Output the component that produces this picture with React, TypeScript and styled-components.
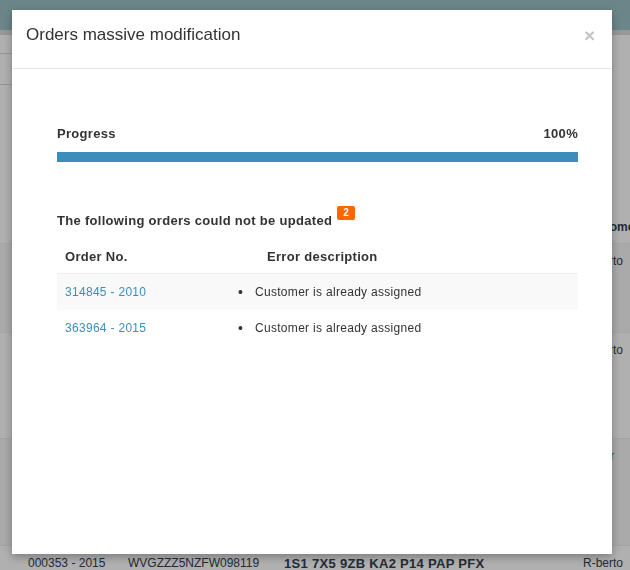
import React from "react";
import styled, { createGlobalStyle } from "styled-components";

const GlobalStyle = createGlobalStyle`
  html, body { margin: 0; padding: 0; }
  body {
    font-family: "Liberation Sans", Arial, sans-serif;
    color: #333;
    background: #fff;
  }
  * { box-sizing: border-box; }
`;

/* ---------- background page ---------- */

const Page = styled.div`
  width: 630px;
  height: 570px;
  overflow: hidden;
  background: #fff;
  display: flex;
  flex-direction: column;
`;

const TopBar = styled.div`
  height: 30px;
  flex: none;
  background: #9cc1c6;
`;

const SubBar = styled.div`
  height: 5px;
  flex: none;
  background: #dcdcdc;
`;

const FilterArea = styled.div`
  height: 175px;
  flex: none;
  padding-top: 18px;
`;

const FilterBox = styled.div`
  width: 200px;
  height: 32px;
  border-top: 1px solid #d8d8d8;
  border-bottom: 1px solid #d8d8d8;
`;

const BgRow = styled.div<{ $h: number; $striped?: boolean; $head?: boolean }>`
  height: ${(p) => p.$h}px;
  flex: none;
  display: grid;
  grid-template-columns: 100px 156px 299px 1fr;
  align-items: start;
  padding: 9px 0 0 28px;
  font-size: 12px;
  line-height: 17px;
  color: #34404f;
  font-weight: ${(p) => (p.$head ? 700 : 400)};
  background: ${(p) => (p.$striped ? "#f6f6f6" : "#fff")};
  border-top: ${(p) => (p.$head ? "none" : "1px solid #ececec")};
`;

const BgCell = styled.span<{ $bold?: boolean; $link?: boolean }>`
  white-space: nowrap;
  font-weight: ${(p) => (p.$bold ? 700 : "inherit")};
  font-size: ${(p) => (p.$bold ? "13px" : "12px")};
  letter-spacing: ${(p) => (p.$bold ? "0.3px" : "0")};
  color: ${(p) => (p.$link ? "#3c8dbc" : "inherit")};
`;

/* ---------- modal ---------- */

const Overlay = styled.div`
  position: fixed;
  inset: 0;
  background: rgba(0, 0, 0, 0.31);
`;

const Modal = styled.div`
  position: fixed;
  top: 10px;
  left: 12px;
  width: 600px;
  height: 544px;
  background: #fff;
  box-shadow: 0 3px 9px rgba(0, 0, 0, 0.3);
  display: flex;
  flex-direction: column;
`;

const ModalHeader = styled.div`
  display: flex;
  justify-content: space-between;
  align-items: flex-start;
  padding: 15px 15px 22px 14px;
  border-bottom: 1px solid #e5e5e5;
`;

const Title = styled.h4`
  margin: 0;
  font-size: 17px;
  line-height: 20px;
  font-weight: 400;
  color: #333;
`;

const CloseButton = styled.button`
  border: none;
  background: none;
  padding: 0;
  margin: 1px 2px 0 0;
  font-family: "Liberation Sans", Arial, sans-serif;
  font-size: 19px;
  line-height: 20px;
  font-weight: 700;
  color: #c4c4c4;
  cursor: pointer;
`;

const ModalBody = styled.div`
  padding: 56px 34px 0 45px;
  display: flex;
  flex-direction: column;
`;

const ProgressHead = styled.div`
  display: flex;
  justify-content: space-between;
  font-size: 13px;
  line-height: 18px;
  font-weight: 700;
  letter-spacing: 0.3px;
  color: #333;
`;

const ProgressTrack = styled.div`
  margin-top: 9px;
  height: 10px;
  background: #f0f0f0;
`;

const ProgressFill = styled.div`
  height: 100%;
  background: #3c8dbc;
`;

const SectionTitle = styled.div`
  margin-top: 50px;
  font-size: 13px;
  line-height: 18px;
  font-weight: 700;
  letter-spacing: 0.3px;
  color: #333;
  display: flex;
  align-items: flex-start;
`;

const Badge = styled.span`
  margin: -6px 0 0 5px;
  height: 14px;
  padding: 0 6px;
  border-radius: 2px;
  background: #ff6600;
  color: #fff;
  font-size: 10px;
  line-height: 14px;
  font-weight: 700;
  letter-spacing: 0;
`;

const Table = styled.div`
  margin-top: 10px;
  display: grid;
  grid-template-columns: 175px 1fr;
`;

const HeadCell = styled.div<{ $indent: number }>`
  padding: 8px 0 8px ${(p) => p.$indent}px;
  font-size: 13px;
  line-height: 17px;
  font-weight: 700;
  letter-spacing: 0.3px;
  color: #333;
  border-bottom: 1px solid #eeeeee;
`;

const Cell = styled.div<{ $striped: boolean; $indent: number }>`
  height: 36px;
  display: flex;
  align-items: center;
  padding-left: ${(p) => p.$indent}px;
  background: ${(p) => (p.$striped ? "#f9f9f9" : "#fff")};
  font-size: 12px;
  letter-spacing: 0.3px;
  color: #333;
`;

const OrderLink = styled.a`
  color: #3c8dbc;
  text-decoration: none;
`;

const Bullet = styled.span`
  width: 17px;
  flex: none;
  font-size: 14px;
  line-height: 12px;
`;

const errors = [
  { order: "314845 - 2010", message: "Customer is already assigned" },
  { order: "363964 - 2015", message: "Customer is already assigned" },
];

export default function App() {
  return (
    <>
      <GlobalStyle />
      <Page>
        <TopBar />
        <SubBar />
        <FilterArea>
          <FilterBox />
        </FilterArea>
        <BgRow $h={33} $head>
          <BgCell>Order No.</BgCell>
          <BgCell>VIN</BgCell>
          <BgCell>Options</BgCell>
          <BgCell>Customer</BgCell>
        </BgRow>
        <BgRow $h={89} $striped>
          <BgCell>314845 - 2010</BgCell>
          <BgCell>WVGZZZ5NZAW014032</BgCell>
          <BgCell $bold>1S1 7X5 9ZB</BgCell>
          <BgCell>R-berto</BgCell>
        </BgRow>
        <BgRow $h={106}>
          <BgCell>363964 - 2015</BgCell>
          <BgCell>WVGZZZ5NZFW012345</BgCell>
          <BgCell $bold>KA2 P14 PAP</BgCell>
          <BgCell>R-berto</BgCell>
        </BgRow>
        <BgRow $h={107} $striped>
          <BgCell>000352 - 2015</BgCell>
          <BgCell>WVGZZZ5NZFW098118</BgCell>
          <BgCell $bold>PFX</BgCell>
          <BgCell $link>Editar</BgCell>
        </BgRow>
        <BgRow $h={40}>
          <BgCell>000353 - 2015</BgCell>
          <BgCell>WVGZZZ5NZFW098119</BgCell>
          <BgCell $bold>1S1 7X5 9ZB KA2 P14 PAP PFX</BgCell>
          <BgCell>R-berto</BgCell>
        </BgRow>
      </Page>
      <Overlay />
      <Modal>
        <ModalHeader>
          <Title>Orders massive modification</Title>
          <CloseButton aria-label="Close">×</CloseButton>
        </ModalHeader>
        <ModalBody>
          <ProgressHead>
            <span>Progress</span>
            <span>100%</span>
          </ProgressHead>
          <ProgressTrack>
            <ProgressFill style={{ width: "100%" }} />
          </ProgressTrack>
          <SectionTitle>
            The following orders could not be updated
            <Badge>{errors.length}</Badge>
          </SectionTitle>
          <Table>
            <HeadCell $indent={8}>Order No.</HeadCell>
            <HeadCell $indent={35}>Error description</HeadCell>
            {errors.map((e, i) => (
              <React.Fragment key={e.order}>
                <Cell $striped={i % 2 === 0} $indent={8}>
                  <OrderLink href="#">{e.order}</OrderLink>
                </Cell>
                <Cell $striped={i % 2 === 0} $indent={6}>
                  <Bullet>•</Bullet>
                  {e.message}
                </Cell>
              </React.Fragment>
            ))}
          </Table>
        </ModalBody>
      </Modal>
    </>
  );
}
